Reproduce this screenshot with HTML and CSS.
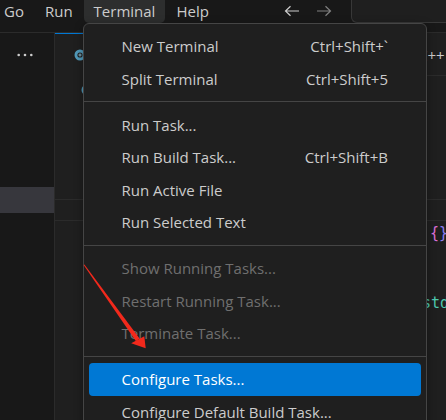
FILE: index.html
```html
<!DOCTYPE html>
<html lang="en">
<head>
<meta charset="utf-8">
<title>Terminal menu</title>
<link rel="stylesheet" href="styles.css">
</head>
<body>
<div class="window">
  <header class="titlebar">
    <nav class="menubar">
      <div class="menubar-item">Go</div>
      <div class="menubar-item">Run</div>
      <div class="menubar-item open">Terminal</div>
      <div class="menubar-item">Help</div>
    </nav>
    <div class="spacer"></div>
    <div class="nav">
      <span class="nav-btn">
        <svg width="16" height="12" viewBox="0 0 16 12"><path d="M15 6H1.8M6.5 1.2L1.5 6l5 4.8" fill="none" stroke="#cccccc" stroke-width="1.2"/></svg>
      </span>
      <span class="nav-btn dim">
        <svg width="16" height="12" viewBox="0 0 16 12"><path d="M1 6h13.2M9.5 1.2l5 4.8-5 4.8" fill="none" stroke="#808080" stroke-width="1.2"/></svg>
      </span>
    </div>
    <div class="search"></div>
  </header>

  <div class="workbench">
    <aside class="sidebar">
      <div class="sidebar-head">
        <svg width="16" height="4" viewBox="0 0 16 4"><circle cx="1.7" cy="2" r="1.3" fill="#cccccc"/><circle cx="8" cy="2" r="1.3" fill="#cccccc"/><circle cx="14.3" cy="2" r="1.3" fill="#cccccc"/></svg>
      </div>
      <div class="sidebar-row selected"></div>
    </aside>

    <main class="editor">
      <div class="tabbar">
        <div class="tab active">
          <svg class="cpp-icon" width="12" height="12" viewBox="0 0 12 12"><circle cx="6" cy="6" r="5.5" fill="#519aba"/><circle cx="6" cy="6" r="2.6" fill="#1f1f1f"/><path d="M6 4.4v3.2M4.4 6h3.2" stroke="#8fc3d9" stroke-width="0.9"/></svg>
        </div>
        <div class="tab">
          <span class="tab-label">C++</span>
        </div>
      </div>
      <div class="breadcrumbs">
        <svg class="cpp-icon" width="12" height="12" viewBox="0 0 12 12"><circle cx="6" cy="6" r="5.5" fill="#519aba"/><circle cx="6" cy="6" r="2.6" fill="#1f1f1f"/></svg>
      </div>
      <div class="code">
        <div class="sticky"></div>
        <div class="line brace-line"><span class="b1">{</span><span class="b2">}</span></div>
        <div class="line"></div>
        <div class="line"></div>
        <div class="line std-line"><span class="type">std</span></div>
      </div>
    </main>
  </div>

  <div class="menu">
    <div class="item"><span>New Terminal</span><span class="key">Ctrl+Shift+`</span></div>
    <div class="item"><span>Split Terminal</span><span class="key">Ctrl+Shift+5</span></div>
    <div class="sep"></div>
    <div class="item"><span>Run Task...</span></div>
    <div class="item"><span>Run Build Task...</span><span class="key">Ctrl+Shift+B</span></div>
    <div class="item"><span>Run Active File</span></div>
    <div class="item"><span>Run Selected Text</span></div>
    <div class="sep"></div>
    <div class="item disabled"><span>Show Running Tasks...</span></div>
    <div class="item disabled"><span>Restart Running Task...</span></div>
    <div class="item disabled"><span>Terminate Task...</span></div>
    <div class="sep"></div>
    <div class="item active"><span>Configure Tasks...</span></div>
    <div class="item"><span>Configure Default Build Task...</span></div>
  </div>

  <svg class="annotation" width="446" height="420" viewBox="0 0 446 420">
    <path d="M83.6 264.9 L84.4 264.6 L139.6 338.4 L136 341.2 Z" fill="#f2291c"/>
    <path d="M145.7 348.2 L144.3 336.2 L131.2 343.2 Z" fill="#f2291c"/>
  </svg>
</div>
</body>
</html>
```

FILE: styles.css
```css
* { box-sizing: border-box; }

html, body {
  margin: 0;
  padding: 0;
  background: #1f1f1f;
}

body {
  font-family: "Open Sans", "Noto Sans", "Liberation Sans", sans-serif;
  font-size: 15px;
  color: #cccccc;
}

.window {
  position: relative;
  width: 446px;
  height: 420px;
  overflow: hidden;
}

/* ---------- title bar ---------- */
.titlebar {
  display: flex;
  align-items: flex-start;
  height: 33px;
  background: #181818;
  border-bottom: 1px solid #2b2b2b;
}

.menubar {
  display: flex;
  gap: 1px;
  margin-left: -6px;
}

.menubar-item {
  height: 23px;
  line-height: 22px;
  padding: 0 10px;
  border-radius: 0 0 5px 5px;
  color: #cccccc;
}

.menubar-item.open {
  background: #2d2e2e;
}

.spacer { flex: 1; }

.nav {
  display: flex;
  margin-right: 11px;
}

.nav-btn {
  width: 32px;
  height: 22px;
  display: flex;
  align-items: center;
  justify-content: center;
}

.search {
  width: 95px;
  height: 23px;
  flex: none;
  background: #1f1f1f;
  border: 1px solid #383838;
  border-top: none;
  border-right: none;
  border-radius: 0 0 0 6px;
}

/* ---------- workbench ---------- */
.workbench {
  display: flex;
  height: 387px;
}

.sidebar {
  width: 55px;
  flex: none;
  background: #181818;
  border-right: 1px solid #2b2b2b;
}

.sidebar-head {
  height: 44px;
  display: flex;
  align-items: center;
  padding-left: 17px;
}

.sidebar-row.selected {
  margin-top: 110px;
  height: 26px;
  background: #37373d;
}

.editor {
  flex: 1;
  background: #1f1f1f;
  min-width: 0;
}

.tabbar {
  display: flex;
  height: 43px;
  border-bottom: 1px solid #2b2b2b;
  background: #1f1f1f;
}

.tab {
  display: flex;
  align-items: center;
  height: 43px;
  padding-left: 19px;
  font-size: 15px;
}

.tab.active {
  width: 363px;
  border-top: 1px solid #0078d4;
  height: 43px;
  margin-bottom: -1px;
  background: #1f1f1f;
}

.tab-label { color: #cccccc; }

.tab:not(.active) { padding-left: 0; }

.breadcrumbs {
  height: 27px;
  display: flex;
  align-items: center;
  padding-left: 26px;
}

.code {
  font-family: "DejaVu Sans Mono", "Liberation Mono", monospace;
  font-size: 15px;
}

.sticky {
  margin-top: 96px;
  height: 22px;
  border-top: 1px solid #2b2b2b;
  border-bottom: 1px solid #2b2b2b;
  margin-bottom: 1px;
}

.line {
  height: 23.4px;
  line-height: 23.4px;
  white-space: pre;
}

.brace-line { padding-left: 375px; }
.std-line { padding-left: 367px; }

.b1 { color: #da70d6; }
.b2 { color: #8f7ff0; }
.type { color: #4ec9b0; }

/* ---------- dropdown menu (overlay) ---------- */
.menu {
  position: absolute;
  left: 83px;
  top: 23px;
  width: 344px;
  height: 420px;
  padding: 6px 5px 0;
  background: #1f1f1f;
  border: 1px solid #454545;
  border-radius: 6px;
  box-shadow: 0 2px 8px rgba(0, 0, 0, 0.36);
}

.item {
  display: flex;
  align-items: center;
  justify-content: space-between;
  height: 32.5px;
  padding: 0 33px 0 32.5px;
  border-radius: 4px;
  color: #cccccc;
  white-space: nowrap;
}

.item.disabled { color: #6f6f6f; }

.item.active {
  background: #0078d4;
  color: #ffffff;
}

.sep {
  height: 1px;
  background: #454545;
  margin: 6px -5px 6.5px;
}

/* ---------- annotation arrow ---------- */
.annotation {
  position: absolute;
  left: 0;
  top: 0;
  pointer-events: none;
}
```
